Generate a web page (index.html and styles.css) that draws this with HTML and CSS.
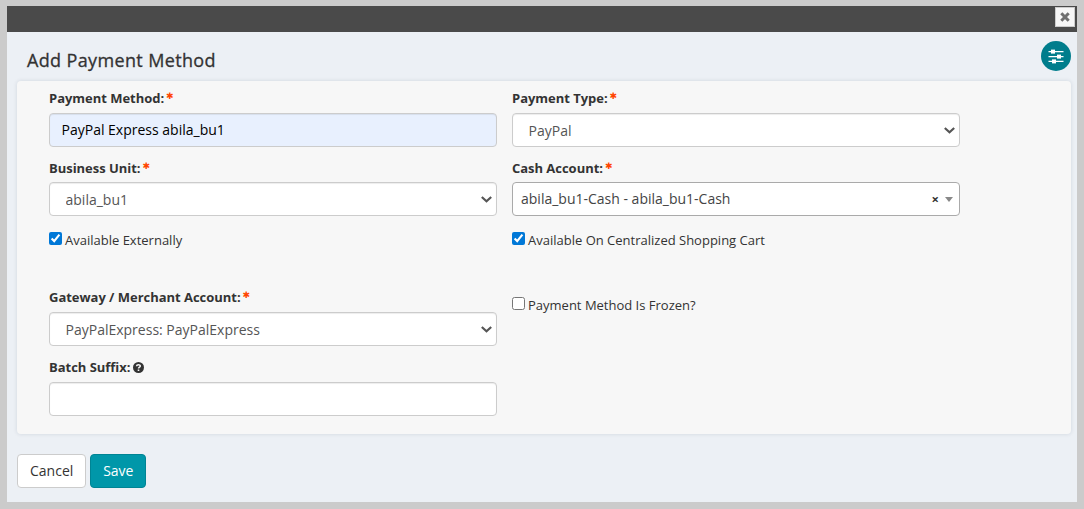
FILE: index.html
```html
<!DOCTYPE html>
<html lang="en">
<head>
  <meta charset="UTF-8" />
  <meta name="viewport" content="width=device-width, initial-scale=1.0"/>
  <title>Add Payment Method</title>
  <link rel="stylesheet" href="styles.css">
</head>
<body>

  <div class="modal">
    <div class="titlebar">
      <button class="close" type="button" aria-label="Close">
        <svg width="10" height="10" viewBox="0 0 10 10"><path d="M1.3 1.3 8.7 8.7M8.7 1.3 1.3 8.7" stroke="#6e6e6e" stroke-width="3"/></svg>
      </button>
    </div>

    <header class="heading">
      <h1>Add Payment Method</h1>
      <button class="settings" type="button" aria-label="Settings">
        <svg width="16" height="15" viewBox="0 0 16 15" fill="#fff">
          <path d="M0.5 2h15v1.2h-15zM0.5 7h15v1.2h-15zM0.5 11.8h15V13h-15z"/>
          <rect x="3" y="0.6" width="4" height="4"/>
          <rect x="9" y="5.6" width="4" height="4"/>
          <rect x="4" y="10.4" width="4" height="4"/>
        </svg>
      </button>
    </header>

    <form>
      <div class="panel">
        <div class="field">
          <label for="method">Payment Method:<span class="required">✱</span></label>
          <input class="control filled" id="method" type="text" value="PayPal Express abila_bu1">
        </div>
        <div class="field">
          <label for="type">Payment Type:<span class="required">✱</span></label>
          <select class="control" id="type"><option>PayPal</option></select>
        </div>

        <div class="field">
          <label class="low" for="unit">Business Unit:<span class="required">✱</span></label>
          <select class="control" id="unit"><option>abila_bu1</option></select>
        </div>
        <div class="field">
          <label class="low">Cash Account:<span class="required">✱</span></label>
          <div class="control combo">
            <span>abila_bu1-Cash - abila_bu1-Cash</span>
            <span class="clear">×</span>
            <span class="arrow"></span>
          </div>
        </div>

        <label class="check"><input type="checkbox" checked>Available Externally</label>
        <label class="check"><input type="checkbox" checked>Available On Centralized Shopping Cart</label>

        <div class="field">
          <label for="gateway">Gateway / Merchant Account:<span class="required">✱</span></label>
          <select class="control" id="gateway"><option>PayPalExpress: PayPalExpress</option></select>
        </div>
        <label class="check frozen"><input type="checkbox">Payment Method Is Frozen?</label>

        <div class="field">
          <label for="suffix">Batch Suffix:<svg class="help" width="11" height="11" viewBox="0 0 11 11"><circle cx="5.5" cy="5.5" r="5.5" fill="#333"/><path d="M3.5 4.2C3.7 2.2 7.4 2.2 7.3 4.1 7.3 5.2 5.5 5.2 5.5 6.6" fill="none" stroke="#f7f7f7" stroke-width="1.5"/><path d="M4.7 7.5h1.6V9H4.7z" fill="#f7f7f7"/></svg></label>
          <input class="control" id="suffix" type="text">
        </div>
      </div>

      <div class="actions">
        <button class="btn" type="button">Cancel</button>
        <button class="btn primary" type="button">Save</button>
      </div>
    </form>
  </div>

</body>
</html>
```

FILE: styles.css
```css
* {
  box-sizing: border-box;
}

body {
  margin: 0;
  height: 509px;
  padding: 6px 7px 7px;
  background: #cbcbcb;
  color: #333;
  font-family: "Open Sans", sans-serif;
  font-size: 13px;
  line-height: 20px;
}

.modal {
  height: 496px;
  background: #ecf0f5;
}

.titlebar {
  display: flex;
  justify-content: flex-end;
  height: 26px;
  padding: 1px 2px;
  background: #4a4a4a;
}

.close {
  display: flex;
  align-items: center;
  justify-content: center;
  width: 20px;
  height: 20px;
  padding: 0;
  background: #f6f6f6;
  border: 1px solid #ccc;
}

.heading {
  display: flex;
  justify-content: space-between;
  height: 49px;
  padding: 8px 6px 0 20px;
}

.heading h1 {
  margin: 10px 0 0;
  font-size: 18px;
  font-weight: 500;
  line-height: 20px;
  letter-spacing: 0.36px;
  -webkit-text-stroke: 0.3px #333;
}

.settings {
  display: flex;
  align-items: center;
  justify-content: center;
  width: 30px;
  height: 30px;
  margin-top: 0.5px;
  padding: 2px 0 0;
  border: 0;
  border-radius: 50%;
  background: #007d8c;
}

/* Form panel */
.panel {
  display: grid;
  grid-template-columns: 448px 448px;
  grid-template-rows: 59px 59px 51px 60px 59px;
  gap: 10px 15px;
  height: 353px;
  margin: 0 6px 0 10px;
  padding: 7px 32px;
  background: #f7f7f7;
  border-radius: 4px;
  box-shadow: 0 0 4px rgba(0, 30, 60, 0.12);
}

.field {
  display: flex;
  flex-direction: column;
}

.field label {
  height: 20px;
  margin-bottom: 5px;
  font-weight: 700;
  letter-spacing: -0.03px;
}

.field .low {
  margin: 1px 0 4px;
}

.required {
  margin-left: 2px;
  color: #ff4500;
  font-family: "DejaVu Sans", sans-serif;
  font-size: 9px;
  line-height: 1;
  vertical-align: 4px;
}

.help {
  margin-left: 3px;
  vertical-align: -1px;
}

.control {
  width: 100%;
  height: 34px;
  padding: 6px 12px;
  background-color: #fff;
  border: 1px solid #ccc;
  border-radius: 4px;
  box-shadow: inset 0 1px 1px rgba(0, 0, 0, 0.075);
  color: #555;
  font: 14px/20px "Open Sans", sans-serif;
}

select.control {
  appearance: none;
  padding: 7px 15.5px 5px;
  background-image: url("data:image/svg+xml,%3Csvg xmlns='http://www.w3.org/2000/svg' width='11' height='7' viewBox='0 0 11 7'%3E%3Cpath d='M.8 1 5.5 5.2 10.2 1' fill='none' stroke='%23555' stroke-width='2.2'/%3E%3C/svg%3E");
  background-position: right 4px top 13px;
  background-repeat: no-repeat;
}

.filled {
  padding: 5px 11.5px 7px;
  background-color: #e8f0fe;
  color: #000;
}

.combo {
  display: flex;
  align-items: center;
  padding: 0 6px 0 8px;
  border-color: #aaa;
  box-shadow: none;
  color: #444;
}

.clear {
  margin: 0 6px 0 auto;
  color: #333;
  font-size: 13px;
  font-weight: 700;
}

.arrow {
  border: 4px solid transparent;
  border-top: 5px solid #888;
  border-bottom: 0;
}

.check {
  display: flex;
  align-items: flex-start;
  padding-top: 4px;
}

.check input {
  width: 13px;
  height: 13px;
  margin: 2px 3px 0 0;
  accent-color: #0078d7;
}

.frozen {
  padding-top: 8px;
}

.actions {
  display: flex;
  gap: 4px;
  padding: 20px 10px;
}

.btn {
  height: 34px;
  padding: 0 12px;
  background: #fff;
  border: 1px solid #ccc;
  border-radius: 4px;
  color: #333;
  font: 14px/20px "Open Sans", sans-serif;
}

.primary {
  width: 56px;
  padding: 0;
  background: #0097a9;
  border-color: #008494;
  color: #fff;
}
```
